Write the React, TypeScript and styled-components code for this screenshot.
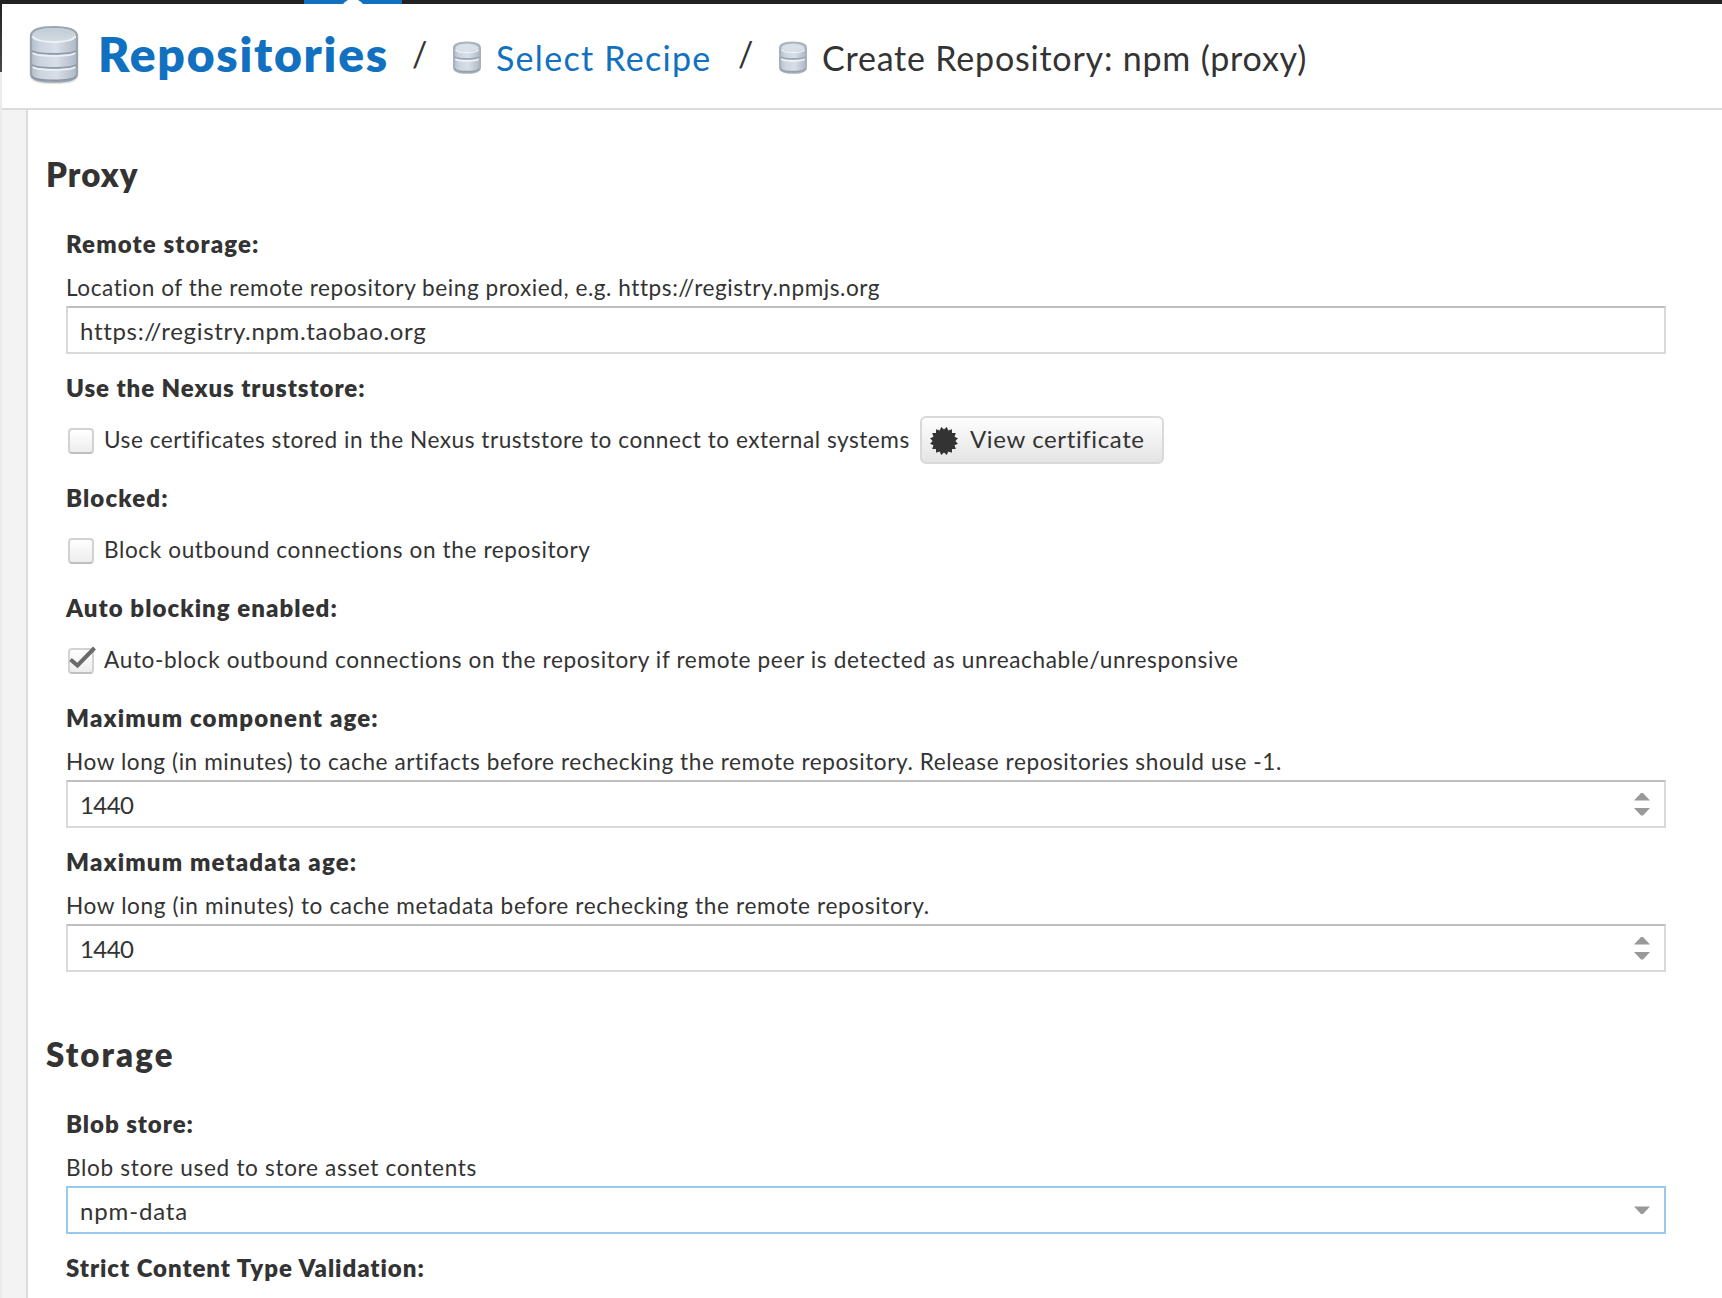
import React from "react";
import styled, { createGlobalStyle, css } from "styled-components";

const GlobalStyle = createGlobalStyle`
  * { box-sizing: border-box; }
  body {
    margin: 0;
    background: #fff;
    color: #333;
    font-family: Lato, "Open Sans", sans-serif;
    overflow: hidden;
  }
`;

const Screen = styled.div`
  display: flex;
  flex-direction: column;
  width: 1722px;
  height: 1298px;
  overflow: hidden;
`;

const TopBar = styled.div`
  display: flex;
  flex: none;
  height: 4px;
  padding-left: 304px;
  background: #222;
`;

const ActiveTab = styled.div`
  display: flex;
  justify-content: center;
  width: 98px;
  background: #1170c0;
`;

const Main = styled.div`
  display: flex;
  flex: 1;
  min-height: 0;
`;

const MenuEdge = styled.div`
  width: 2px;
  background: linear-gradient(#222, #484848 68px, #ececec 68px);
`;

const Feature = styled.div`
  display: flex;
  flex: 1;
  flex-direction: column;
  min-width: 0;
`;

const Breadcrumb = styled.header`
  display: flex;
  flex: none;
  height: 106px;
  padding-left: 25px;
  border-bottom: 2px solid #dcdcdc;
  white-space: nowrap;
`;

const IconSlot = styled.span<{ $top: number; $width: number }>`
  flex: none;
  width: ${(p) => p.$width}px;
  padding-top: ${(p) => p.$top}px;
  line-height: 0;
`;

const RootLink = styled.a`
  width: 314px;
  padding-top: 21px;
  color: #1170c0;
  font-size: 48px;
  font-weight: 800;
  line-height: 58px;
  letter-spacing: 1.75px;
`;

const Slash = styled.span`
  width: 40px;
  padding-top: 30px;
  font-size: 34px;
  line-height: 40px;
`;

const Crumb = styled.span<{ $link?: boolean; $width?: number; $track: number }>`
  width: ${(p) => (p.$width ? `${p.$width}px` : "auto")};
  padding-top: 33px;
  color: ${(p) => (p.$link ? "#1170c0" : "#333")};
  font-size: 34px;
  line-height: 41px;
  letter-spacing: ${(p) => p.$track}px;
`;

const Body = styled.div`
  display: flex;
  flex: 1;
  min-height: 0;
`;

const Gutter = styled.div`
  width: 26px;
  border-right: 2px solid #dcdcdc;
  background: #f3f3f3;
`;

const Form = styled.form`
  flex: 1;
  padding: 0 56px 0 18px;
`;

const Section = styled.section`
  display: flow-root;
  padding-left: 20px;
  margin-bottom: 7px;
`;

const SectionTitle = styled.h2<{ $track: number }>`
  height: 111px;
  margin: 0 0 0 -20px;
  padding-top: 44px;
  font-size: 33px;
  font-weight: 800;
  line-height: 40px;
  letter-spacing: ${(p) => p.$track}px;
`;

const Field = styled.div`
  display: flex;
  flex-direction: column;
  margin-bottom: 11px;
`;

const Label = styled.div<{ $track: number }>`
  height: 44px;
  padding-top: 1px;
  font-size: 24px;
  font-weight: 800;
  line-height: 44px;
  letter-spacing: ${(p) => p.$track}px;
  white-space: nowrap;
`;

const Help = styled.div<{ $track: number }>`
  height: 41px;
  padding-top: 2px;
  font-size: 22.6px;
  line-height: 41px;
  letter-spacing: ${(p) => p.$track}px;
  white-space: nowrap;
`;

const Control = styled.div<{ $focused?: boolean; $track: number }>`
  display: flex;
  align-items: center;
  justify-content: space-between;
  height: 48px;
  padding: 1px 13px 0 12px;
  border: 2px solid #d9d9d9;
  border-top-color: #c0c0c0;
  ${(p) => p.$focused && css`border-color: #99c9ec;`}
  font-size: 24px;
  letter-spacing: ${(p) => p.$track}px;
`;

const CheckRow = styled.div`
  display: flex;
  align-items: center;
  height: 48px;
  margin-top: 7px;
  padding-left: 2px;
`;

const CheckCell = styled.div`
  display: flex;
  flex: none;
  align-items: center;
  min-width: 852px;
`;

const Box = styled.span`
  display: flex;
  flex: none;
  width: 26px;
  height: 26px;
  margin: 2px 10px 0 0;
  border: 2px solid #d2d2d2;
  border-bottom-color: #bfbfbf;
  border-radius: 4px;
  background: linear-gradient(#fff, #ededed);
`;

const CheckMark = styled.svg`
  flex: none;
  margin: -4px 0 0 -2px;
  overflow: visible;
`;

const CheckText = styled.span<{ $track: number }>`
  font-size: 22.6px;
  line-height: 44px;
  letter-spacing: ${(p) => p.$track}px;
  white-space: nowrap;
`;

const Button = styled.button`
  display: flex;
  align-items: center;
  gap: 12px;
  width: 244px;
  height: 48px;
  padding: 0 0 0 8px;
  border: 2px solid #d9d9d9;
  border-radius: 6px;
  background: linear-gradient(#fefefe, #e4e4e4);
  color: #333;
  font: 24px Lato, sans-serif;
  letter-spacing: 0.62px;
  white-space: nowrap;
`;

const ButtonText = styled.span`
  padding-bottom: 3px;
`;

function LargeDatabase() {
  return (
    <svg width="54" height="62" viewBox="0 0 54 62">
      <defs>
        <linearGradient id="side" x1="0" x2="1">
          <stop offset="0" stopColor="#b3bdc9" />
          <stop offset=".2" stopColor="#ccd4df" />
          <stop offset=".55" stopColor="#d9dfe9" />
          <stop offset="1" stopColor="#aeb8c4" />
        </linearGradient>
        <linearGradient id="lid" x1="0" y1="0" x2="0" y2="1">
          <stop offset="0" stopColor="#c2ccd5" />
          <stop offset="1" stopColor="#d2dbe3" />
        </linearGradient>
        <filter id="soft" x="-20%" y="-20%" width="140%" height="140%">
          <feGaussianBlur stdDeviation="1.2" />
        </filter>
      </defs>
      <path d="M4 12v40q0 7 23 7t23-7V12z" fill="#777" opacity=".6" filter="url(#soft)" />
      <path d="M4 12q0-9 23-9t23 9v38q0 7.500-23 7.500T4 50z" fill="url(#side)" stroke="#98a5b0" strokeWidth="2.200" />
      <ellipse cx="27" cy="11" rx="21.500" ry="7" fill="url(#lid)" />
      <path d="M5.500 12c2 8 41 8 43 0" fill="none" stroke="#eef2f7" strokeWidth="1.800" />
      <path d="M5 26.500c3 4.500 41 4.500 44 0M5 40.500c3 4.500 41 4.500 44 0" fill="none" stroke="#8d9aa8" strokeWidth="1.600" />
      <path d="M6 28.800c4 4 38 4 42 0M6 42.800c4 4 38 4 42 0" fill="none" stroke="#edf1f7" strokeWidth="1.800" />
      <path d="M5 52c3 5.500 41 5.500 44 0" fill="none" stroke="#87939e" strokeWidth="1.500" />
    </svg>
  );
}

function SmallDatabase() {
  return (
    <svg width="30" height="34" viewBox="0 0 30 34">
      <path d="M2 8v19q0 6 13 6t13-6V8z" fill="#999" opacity=".4" />
      <path d="M2 7q0-5.500 13-5.500T28 7v19.500q0 5-13 5t-13-5z" fill="url(#side)" stroke="#a7b2bb" strokeWidth="2" />
      <ellipse cx="15" cy="6.800" rx="11.300" ry="3.600" fill="#d8e0e8" />
      <path d="M3.500 8.500c2 4 21 4 23 0" fill="none" stroke="#eef2f6" strokeWidth="1.600" />
      <path d="M2.500 15.800c2 2.800 23 2.800 25 0" fill="none" stroke="#99a6b3" strokeWidth="1.600" />
      <path d="M3.500 18c2 2.500 21 2.500 23 0" fill="none" stroke="#f0f4f9" strokeWidth="1.600" />
      <path d="M2.500 27.500c2 4.200 23 4.200 25 0" fill="none" stroke="#94a1a9" strokeWidth="1.600" />
    </svg>
  );
}

const SEAL_POINTS = Array.from({ length: 32 }, (_, i) => {
  const r = i % 2 ? 14.2 : 11.4;
  const a = (i * 11.25 * Math.PI) / 180;
  return `${(14 + r * Math.cos(a)).toFixed(2)},${(14 + r * Math.sin(a)).toFixed(2)}`;
}).join(" ");

const SealIcon = styled.svg`
  flex: none;
  margin-top: 1px;
`;

function Seal() {
  return (
    <SealIcon width="28" height="28" viewBox="0 0 28 28">
      <polygon points={SEAL_POINTS} fill="#333" />
    </SealIcon>
  );
}

function SpinnerArrows() {
  return (
    <svg width="18" height="26" viewBox="0 0 18 26" fill="#999">
      <path d="M1 8.500 8 1h2l7 7.500zM1 16h16l-7 7.500H8z" />
    </svg>
  );
}

function DropArrow() {
  return (
    <svg width="18" height="10" viewBox="0 0 18 10" fill="#999">
      <path d="M1 .5h16L10 8H8z" />
    </svg>
  );
}

type TextProps = { text: string; track: number };

function Checkbox({ checked, text, track }: TextProps & { checked?: boolean }) {
  return (
    <CheckCell>
      <Box>
        {checked && (
          <CheckMark width="28" height="24" viewBox="0 0 28 24">
            <path d="M2.500 13.500l7 6L26.500 2" fill="none" stroke="#6a6a6a" strokeWidth="4" />
          </CheckMark>
        )}
      </Box>
      <CheckText $track={track}>{text}</CheckText>
    </CheckCell>
  );
}

function InputField(props: { label: TextProps; help: TextProps; value: TextProps; focused?: boolean; icon?: React.ReactNode }) {
  return (
    <Field>
      <Label $track={props.label.track}>{props.label.text}</Label>
      <Help $track={props.help.track}>{props.help.text}</Help>
      <Control $focused={props.focused} $track={props.value.track}>
        <span>{props.value.text}</span>
        {props.icon}
      </Control>
    </Field>
  );
}

export default function App() {
  return (
    <Screen>
      <GlobalStyle />
      <TopBar>
        <ActiveTab>
          <svg width="22" height="4" viewBox="0 0 22 4">
            <path d="M6 0h10q3 1.500 5 4H1q2-2.500 5-4z" fill="#fff" />
          </svg>
        </ActiveTab>
      </TopBar>
      <Main>
        <MenuEdge />
        <Feature>
          <Breadcrumb>
            <IconSlot $top={20} $width={71}><LargeDatabase /></IconSlot>
            <RootLink>Repositories</RootLink>
            <Slash>/</Slash>
            <IconSlot $top={37} $width={44}><SmallDatabase /></IconSlot>
            <Crumb $link $width={242} $track={1.28}>Select Recipe</Crumb>
            <Slash>/</Slash>
            <IconSlot $top={37} $width={44}><SmallDatabase /></IconSlot>
            <Crumb $track={0.8}>Create Repository: npm (proxy)</Crumb>
          </Breadcrumb>
          <Body>
            <Gutter />
            <Form>
              <Section>
                <SectionTitle $track={1.1}>Proxy</SectionTitle>
                <InputField
                  label={{ text: "Remote storage:", track: 1.12 }}
                  help={{ text: "Location of the remote repository being proxied, e.g. https://registry.npmjs.org", track: 0.55 }}
                  value={{ text: "https://registry.npm.taobao.org", track: 0.67 }}
                />
                <Field>
                  <Label $track={0.94}>Use the Nexus truststore:</Label>
                  <CheckRow>
                    <Checkbox text="Use certificates stored in the Nexus truststore to connect to external systems" track={0.53} />
                    <Button type="button">
                      <Seal />
                      <ButtonText>View certificate</ButtonText>
                    </Button>
                  </CheckRow>
                </Field>
                <Field>
                  <Label $track={1.12}>Blocked:</Label>
                  <CheckRow>
                    <Checkbox text="Block outbound connections on the repository" track={0.61} />
                  </CheckRow>
                </Field>
                <Field>
                  <Label $track={1.05}>Auto blocking enabled:</Label>
                  <CheckRow>
                    <Checkbox checked text="Auto-block outbound connections on the repository if remote peer is detected as unreachable/unresponsive" track={0.635} />
                  </CheckRow>
                </Field>
                <InputField
                  label={{ text: "Maximum component age:", track: 1.15 }}
                  help={{ text: "How long (in minutes) to cache artifacts before rechecking the remote repository. Release repositories should use -1.", track: 0.57 }}
                  value={{ text: "1440", track: -0.6 }}
                  icon={<SpinnerArrows />}
                />
                <InputField
                  label={{ text: "Maximum metadata age:", track: 1.15 }}
                  help={{ text: "How long (in minutes) to cache metadata before rechecking the remote repository.", track: 0.63 }}
                  value={{ text: "1440", track: -0.6 }}
                  icon={<SpinnerArrows />}
                />
              </Section>
              <Section>
                <SectionTitle $track={2.1}>Storage</SectionTitle>
                <InputField
                  focused
                  label={{ text: "Blob store:", track: 0.95 }}
                  help={{ text: "Blob store used to store asset contents", track: 0.66 }}
                  value={{ text: "npm-data", track: 0.85 }}
                  icon={<DropArrow />}
                />
                <Field>
                  <Label $track={0.95}>Strict Content Type Validation:</Label>
                </Field>
              </Section>
            </Form>
          </Body>
        </Feature>
      </Main>
    </Screen>
  );
}
